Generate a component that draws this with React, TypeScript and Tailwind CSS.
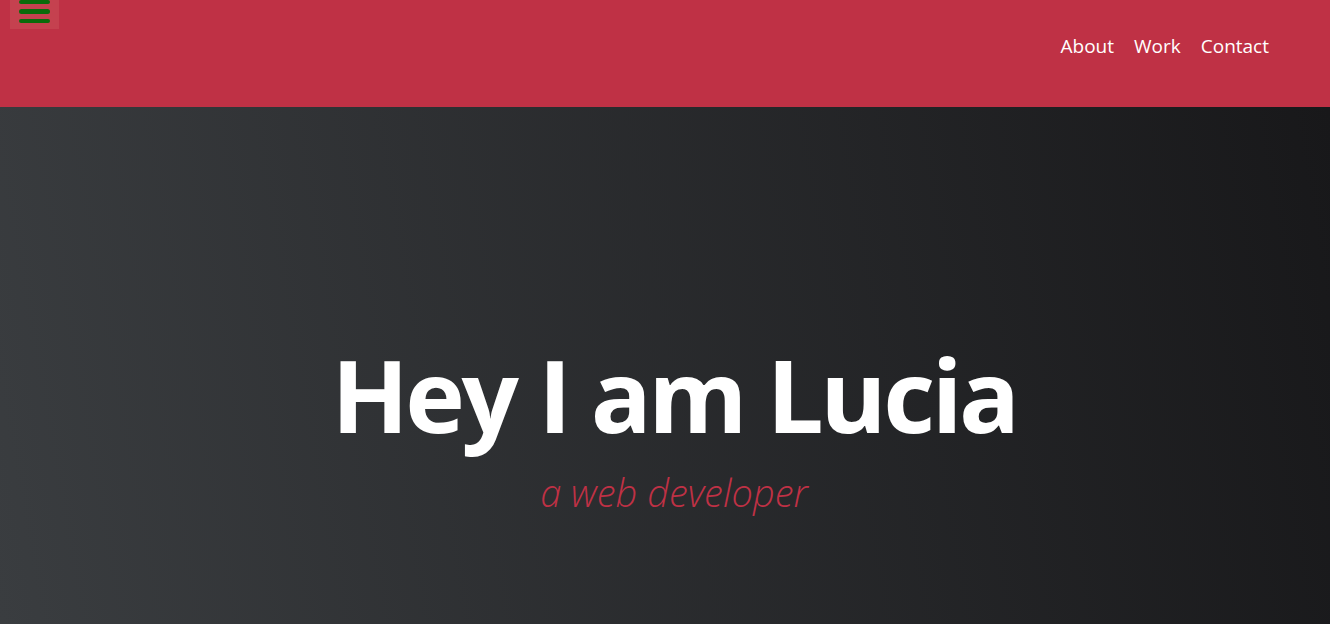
import { useState } from 'react';

export default function App() {
  const [open, setOpen] = useState(false);
  return (
    <div className="min-h-screen font-['Open_Sans','Noto_Sans',sans-serif]">
      <header className="relative h-[107px] w-full bg-[#bf3145]">
        {/* menu toggle */}
        <button
          aria-label="menu"
          onClick={() => setOpen((v) => !v)}
          className="absolute left-[10px] top-0 flex h-[29px] w-[49px] flex-col items-center justify-end gap-[5px] bg-[#c5414f] pb-[6px]"
        >
          <span className="block h-[5px] w-[31px] rounded-full bg-[#0a6b0a]" />
          <span className="block h-[5px] w-[31px] rounded-full bg-[#0a6b0a]" />
          <span className="block h-[5px] w-[31px] rounded-full bg-[#0a6b0a]" />
        </button>
        <nav className="flex justify-end gap-[20px] pr-[61px] pt-[32px] text-[19px] text-white">
          <a href="#about">About</a>
          <a href="#work">Work</a>
          <a href="#contact">Contact</a>
        </nav>
      </header>
      <section className="flex h-[517px] flex-col items-center bg-linear-[80deg] from-[#3a3d40] to-[#18181a] pl-[18px] pt-[232px]">
        <h1 className="text-[101px] font-bold leading-[1.1] tracking-[-3.5px] text-white">Hey I am Lucia</h1>
        <p className="mt-[19px] text-[38px] font-light italic leading-tight text-[#bf3145]">a web developer</p>
      </section>
    </div>
  );
}
